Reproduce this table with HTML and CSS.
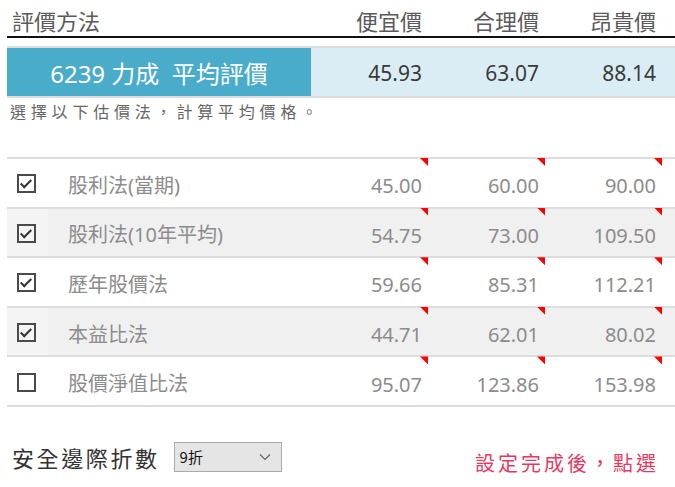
FILE: index.html
```html
<!DOCTYPE html>
<html lang="zh-Hant">
<head>
<meta charset="utf-8">
<link rel="stylesheet" href="styles.css">
</head>
<body>
<div class="wrap">
  <div class="row head">
    <div class="c-label">評價方法</div>
    <div class="c-num">便宜價</div>
    <div class="c-num">合理價</div>
    <div class="c-num">昂貴價</div>
    <div></div>
  </div>
  <div class="row avg">
    <div class="c-label">6239 力成&nbsp; 平均評價</div>
    <div class="c-num">45.93</div>
    <div class="c-num">63.07</div>
    <div class="c-num">88.14</div>
    <div></div>
  </div>
  <p class="hint">選擇以下估價法，計算平均價格。</p>

  <div class="list">
    <div class="row item">
      <div class="c-label"><span class="cb on"></span><span class="name">股利法(當期)</span></div>
      <div class="c-num tri">45.00</div>
      <div class="c-num tri">60.00</div>
      <div class="c-num tri">90.00</div>
      <div></div>
    </div>
    <div class="row item alt">
      <div class="c-label"><span class="cb on"></span><span class="name">股利法(10年平均)</span></div>
      <div class="c-num tri">54.75</div>
      <div class="c-num tri">73.00</div>
      <div class="c-num tri">109.50</div>
      <div></div>
    </div>
    <div class="row item">
      <div class="c-label"><span class="cb on"></span><span class="name">歷年股價法</span></div>
      <div class="c-num tri">59.66</div>
      <div class="c-num tri">85.31</div>
      <div class="c-num tri">112.21</div>
      <div></div>
    </div>
    <div class="row item alt">
      <div class="c-label"><span class="cb on"></span><span class="name">本益比法</span></div>
      <div class="c-num tri">44.71</div>
      <div class="c-num tri">62.01</div>
      <div class="c-num tri">80.02</div>
      <div></div>
    </div>
    <div class="row item">
      <div class="c-label"><span class="cb"></span><span class="name">股價淨值比法</span></div>
      <div class="c-num tri">95.07</div>
      <div class="c-num tri">123.86</div>
      <div class="c-num tri">153.98</div>
      <div></div>
    </div>
  </div>

  <div class="foot">
    <span class="foot-label">安全邊際折數</span>
    <span class="select">9折<svg class="chev" width="12" height="8" viewBox="0 0 12 8"><path d="M1 1.5 L6 6.5 L11 1.5" fill="none" stroke="#666" stroke-width="1.2"/></svg></span>
    <span class="foot-note">設定完成後，點選</span>
  </div>
</div>
</body>
</html>
```
FILE: styles.css
```css
html, body {
  margin: 0;
  padding: 0;
  background: #fff;
  overflow: hidden;
}
body {
  font-family: "Noto Sans", "Noto Sans CJK TC", sans-serif;
  color: #555;
}
.wrap {
  width: 668px;
  padding-left: 7px;
}
.row {
  display: grid;
  grid-template-columns: 304px 117px 117px 117px 1fr;
  align-items: center;
}
.c-num {
  text-align: right;
  padding-right: 6px;
  position: relative;
  height: 100%;
  display: flex;
  align-items: center;
  justify-content: flex-end;
}
.head {
  height: 36px;
  border-bottom: 2px solid #111;
  font-family: "Noto Sans CJK TC", sans-serif;
  font-size: 22px;
  color: #5a5a5a;
}
.head .c-label {
  padding-left: 5px;
  align-self: end;
  line-height: 31px;
}
.head .c-num {
  align-items: flex-end;
  line-height: 31px;
}
.avg {
  margin-top: 8px;
  height: 48px;
  border-top: 2px solid #ddd;
  border-bottom: 2px solid #ddd;
  background: #daedf4;
  font-size: 21px;
  color: #3a3a3a;
}
.avg .c-label {
  background: #4aaccb;
  color: #fff;
  height: 100%;
  display: flex;
  align-items: center;
  justify-content: center;
  font-size: 24px;
}
.avg .c-num {
  padding-top: 2px;
}
.hint {
  margin: 0;
  padding: 0 0 0 3px;
  height: 59px;
  line-height: 26px;
  font-family: "Noto Sans CJK TC", sans-serif;
  font-size: 16px;
  letter-spacing: 4.8px;
  color: #666;
}
.list {
  border-top: 2px solid #ddd;
}
.item {
  height: 47.6px;
  border-bottom: 2px solid #ddd;
  font-size: 20px;
  color: #8c8c8c;
}
.item.alt {
  background: #f0f0f0;
}
.item .c-label {
  display: flex;
  align-items: center;
  height: 100%;
}
.item.alt .c-label {
  background: linear-gradient(to right, #f4f4f4 0, #f4f4f4 41px, transparent 41px);
}
.item .c-num {
  padding-top: 6px;
}
.cb {
  width: 15px;
  height: 15px;
  border: 2px solid #4a4a4a;
  margin-left: 10px;
  margin-right: 32px;
  position: relative;
  flex: none;
  margin-top: 2px;
}
.cb.on::after {
  content: "";
  position: absolute;
  left: 2px;
  top: 1px;
  width: 9px;
  height: 4px;
  border-left: 2px solid #333;
  border-bottom: 2px solid #333;
  transform: translate(-0.5px, 2.5px) rotate(-45deg);
  transform-origin: center;
}
.name {
  font-family: "Noto Sans", "Noto Sans CJK TC", sans-serif;
  padding-top: 3px;
}
.tri::after {
  content: "";
  position: absolute;
  top: 2px;
  right: 0;
  width: 8px;
  height: 8px;
  background: #f00;
  clip-path: polygon(0 0, 100% 0, 100% 100%);
}
.foot {
  display: flex;
  align-items: center;
  height: 76px;
  padding-left: 5px;
  padding-top: 12px;
}
.foot-label {
  font-family: "Noto Sans CJK TC", sans-serif;
  font-size: 22px;
  letter-spacing: 2.6px;
  color: #333;
}
.select {
  margin-left: 14px;
  width: 97px;
  height: 28px;
  border: 1px solid #aaa;
  background: #e5e5e5;
  display: flex;
  align-items: center;
  padding-left: 5px;
  padding-right: 4px;
  box-sizing: content-box;
  font-family: "Noto Sans CJK TC", sans-serif;
  font-size: 15px;
  color: #111;
  justify-content: space-between;
}
.chev {
  margin-right: 6px;
}
.foot-note {
  margin-left: auto;
  margin-right: 16px;
  font-family: "Noto Sans CJK TC", sans-serif;
  font-size: 20px;
  letter-spacing: 3px;
  color: #e8385e;
  padding-top: 12px;
}
```
